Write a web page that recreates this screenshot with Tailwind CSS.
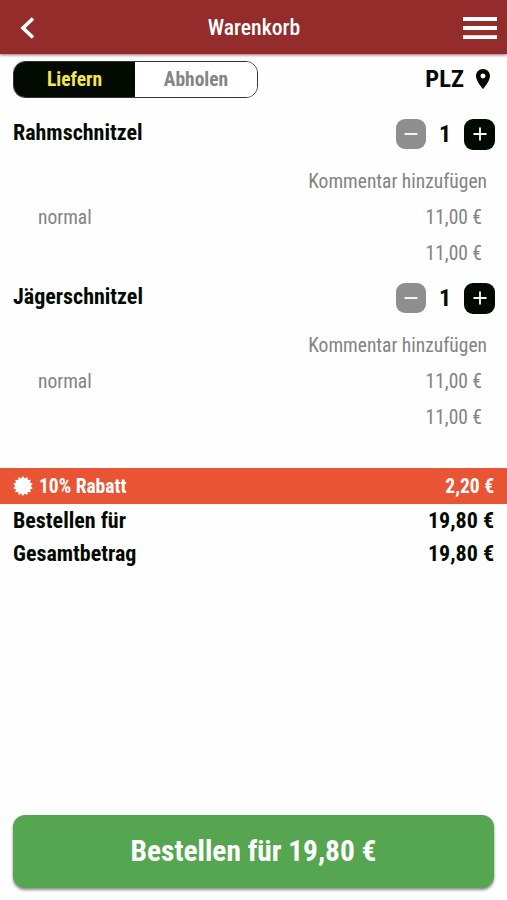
<!DOCTYPE html>
<html lang="de">
<head>
    <meta charset="UTF-8">
    <meta name="viewport" content="width=device-width, initial-scale=1.0">
    <title>Warenkorb</title>
    <script src="https://cdn.jsdelivr.net/npm/@tailwindcss/browser@4"></script>
</head>
<body class="flex flex-col h-screen bg-[#fefefe] text-[#020a02] font-['Roboto_Condensed',Roboto,sans-serif] font-stretch-condensed overflow-hidden">
    <!-- Header -->
    <header class="flex items-center justify-between h-[54px] shrink-0 pl-5 pr-[10px] bg-[#942c2b] text-white shadow-[0_1px_3px_rgba(80,0,0,0.6)]">
        <svg class="w-[34px] h-6" viewBox="0 0 34 24" fill="none" stroke="currentColor" stroke-width="3.6"><path d="M13 3.5 L3 13 L13 22.5"/></svg>
        <h1 class="text-[21.7px] leading-none font-medium pt-0.5 pr-[9px]">Warenkorb</h1>
        <svg class="w-[34px] h-6" viewBox="0 0 34 24" fill="currentColor"><path d="M0 2h34v4H0zM0 11h34v4H0zM0 20.2h34v4H0z"/></svg>
    </header>

    <!-- Liefern / Abholen -->
    <div class="flex items-center justify-between h-[37px] shrink-0 mt-[7px] pl-[13px] pr-[17px]">
        <div class="flex w-[245px] h-[37px] border border-[#333] rounded-xl overflow-hidden text-[19.5px] font-bold">
            <button class="w-[121px] bg-[#020a02] text-[#f3e64e]">Liefern</button>
            <button class="flex-1 bg-white text-[#858585]">Abholen</button>
        </div>
        <div class="flex items-center gap-3 text-[24.5px] font-bold">
            <span>PLZ</span>
            <svg class="w-[14px] h-5 mb-0.5" viewBox="5 2 14 20" fill="currentColor"><path d="M12 2C8.13 2 5 5.13 5 9c0 5.25 7 13 7 13s7-7.75 7-13c0-3.87-3.13-7-7-7zm0 9.5a2.5 2.5 0 0 1 0-5 2.5 2.5 0 0 1 0 5z"/></svg>
        </div>
    </div>

    <!-- Artikel -->
    <section class="h-[164px] shrink-0 pt-[17px]">
        <div class="flex justify-between px-[13px] h-[38px]">
            <h2 class="text-[22px] leading-[35px] font-bold">Rahmschnitzel</h2>
            <div class="flex items-center h-[38px] -mr-px">
                <button class="flex items-center justify-center size-[30px] rounded-[9px] bg-[#8e8e8e]"><svg class="size-[14px]" viewBox="0 0 14 14" stroke="#fff" stroke-width="1.8"><path d="M0.5 7h13"/></svg></button>
                <span class="w-[38px] text-center text-[24px] leading-none font-bold">1</span>
                <button class="flex items-center justify-center size-[31px] rounded-[9px] bg-[#020a02]"><svg class="size-[14px]" viewBox="0 0 14 14" stroke="#fff" stroke-width="1.8"><path d="M0.5 7h13M7 0.5v13"/></svg></button>
            </div>
        </div>
        <div class="mt-[10px] pr-5 text-right text-[19.5px] leading-[37px] text-[#828282]">Kommentar hinzufügen</div>
        <div class="flex justify-between pl-[38px] pr-[25px] text-[19.5px] leading-9 text-[#828282]"><span>normal</span><span>11,00 €</span></div>
        <div class="pr-[25px] text-right text-[19.5px] leading-[35px] text-[#828282]">11,00 €</div>
    </section>

    <section class="h-[206px] shrink-0 pt-[17px]">
        <div class="flex justify-between px-[13px] h-[38px]">
            <h2 class="text-[22px] leading-[35px] font-bold">Jägerschnitzel</h2>
            <div class="flex items-center h-[38px] -mr-px">
                <button class="flex items-center justify-center size-[30px] rounded-[9px] bg-[#8e8e8e]"><svg class="size-[14px]" viewBox="0 0 14 14" stroke="#fff" stroke-width="1.8"><path d="M0.5 7h13"/></svg></button>
                <span class="w-[38px] text-center text-[24px] leading-none font-bold">1</span>
                <button class="flex items-center justify-center size-[31px] rounded-[9px] bg-[#020a02]"><svg class="size-[14px]" viewBox="0 0 14 14" stroke="#fff" stroke-width="1.8"><path d="M0.5 7h13M7 0.5v13"/></svg></button>
            </div>
        </div>
        <div class="mt-[10px] pr-5 text-right text-[19.5px] leading-[37px] text-[#828282]">Kommentar hinzufügen</div>
        <div class="flex justify-between pl-[38px] pr-[25px] text-[19.5px] leading-9 text-[#828282]"><span>normal</span><span>11,00 €</span></div>
        <div class="pr-[25px] text-right text-[19.5px] leading-[35px] text-[#828282]">11,00 €</div>
    </section>

    <!-- Summe -->
    <div class="flex items-center justify-between h-9 shrink-0 px-[13px] pt-px bg-[#e95434] text-white text-[19.5px] font-bold">
        <div class="flex items-center gap-[6px]">
            <svg class="size-5 -mt-0.5" viewBox="-10 -10 20 20" fill="currentColor">
                <path id="burst" d=""/>
            </svg>
            <span>10% Rabatt</span>
        </div>
        <span>2,20 €</span>
    </div>
    <div class="flex justify-between px-[13px] text-[22px] leading-[33px] font-bold"><span>Bestellen für</span><span>19,80 €</span></div>
    <div class="flex justify-between px-[13px] text-[22px] leading-[33px] font-bold"><span>Gesamtbetrag</span><span>19,80 €</span></div>

    <button class="mt-auto mb-3 mx-[13px] h-[73px] shrink-0 rounded-xl bg-[#56a651] text-white text-[29.4px] font-bold shadow-[0_2px_3px_rgba(0,0,0,0.45)]">Bestellen für 19,80 €</button>

    <script>
    // 14 Zacken für das Rabatt-Symbol
    let points = [];
    for (let i = 0; i < 28; i++) {
        const r = i % 2 ? 7.8 : 10;
        const a = i * Math.PI / 14;
        points.push((r * Math.sin(a)).toFixed(2) + ' ' + (-r * Math.cos(a)).toFixed(2));
    }
    document.getElementById('burst').setAttribute('d', 'M' + points.join('L') + 'Z');
    </script>
</body>
</html>
